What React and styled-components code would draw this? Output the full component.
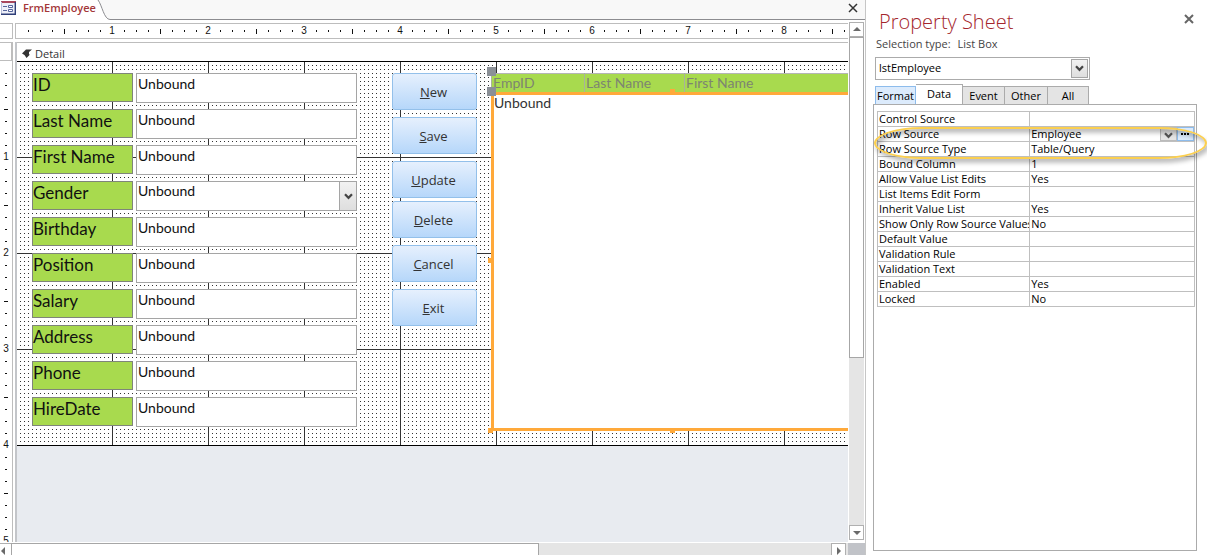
import React, { useEffect, useRef, useState } from "react";
import styled, { createGlobalStyle, css } from "styled-components";

const Global = createGlobalStyle`
  * { box-sizing: border-box; }
  html, body, #root { height: 100%; }
  body { margin: 0; background: #fff; overflow: hidden; font-family: "Open Sans", "Noto Sans", sans-serif; font-size: 11px; color: #111; font-variant-ligatures: none; }
  button, input, select { font: inherit; color: inherit; margin: 0; }
`;

const Window = styled.div`
  display: flex;
  height: 100vh;
`;

const Designer = styled.main`
  flex: 1;
  min-width: 0;
  display: flex;
  flex-direction: column;
  border-right: 1px solid #c6c6c6;
`;

/* Document tab strip */
const TabStrip = styled.div`
  display: flex;
  height: 20px;
  flex: none;
`;
const DocTab = styled.button`
  flex: none;
  display: flex;
  align-items: flex-start;
  gap: 7px;
  width: 96px;
  height: 20px;
  padding: 1px 0 0 1px;
  border: 0;
  background: #fff;
  color: #a4373a;
  font-weight: 600;
  line-height: 14px;
  white-space: nowrap;
`;
const TabEdge = styled.svg`
  flex: none;
  width: 14px;
  height: 20px;
`;
const StripRest = styled.div`
  flex: 1;
  display: flex;
  justify-content: flex-end;
  padding: 3px 7px 0 0;
  background: #f8f8f8;
  border-bottom: 1px solid #8c8c90;
`;
const CloseButton = styled.button`
  display: flex;
  align-items: center;
  justify-content: center;
  width: 10px;
  height: 10px;
  padding: 0;
  border: 0;
  background: none;
`;

/* Rulers */
const Workspace = styled.div`
  flex: 1;
  min-height: 0;
  display: flex;
  padding-top: 2px;
`;
const DesignArea = styled.div`
  flex: 1;
  min-width: 0;
  display: flex;
  flex-direction: column;
  padding-top: 1px;
`;
const RulerRow = styled.div`
  display: flex;
  gap: 2px;
  height: 16px;
  margin-bottom: 3px;
  flex: none;
`;
const RulerCorner = styled.div`
  width: 13px;
  border: 1px solid #bdbdbd;
  border-left: 0;
`;
const RulerTop = styled.div`
  flex: 1;
  min-width: 0;
  display: flex;
  overflow: hidden;
  border: 1px solid #bdbdbd;
  border-right: 0;
  padding-left: 6px;
`;
const RulerBody = styled.div`
  flex: 1;
  min-height: 0;
  display: flex;
`;
const RulerSide = styled.div`
  flex: none;
  width: 13px;
  display: flex;
  flex-direction: column;
  overflow: hidden;
  border: 1px solid #bdbdbd;
  border-width: 1px 1px 0 0;
`;
const SectionSelector = styled.div`
  flex: none;
  height: 18px;
  margin-bottom: 6px;
  border: 1px solid #bdbdbd;
  border-width: 0 1px 1px 0;
`;
const Marks = styled.div`
  flex: 1;
  min-width: 0;
  min-height: 0;
  display: flex;
  flex-direction: ${(p) => (p.$vertical ? "column" : "row")};
  overflow: hidden;
`;
const RulerCell = styled.span`
  flex: none;
  width: 12px;
  height: ${(p) => (p.$vertical ? "12px" : "14px")};
  display: flex;
  align-items: center;
  justify-content: center;
  font: 10px/12px "Liberation Sans", sans-serif;
  color: #111;
`;
const Tick = styled.i`
  background: #111;
  width: ${(p) => (p.$vertical ? (p.$long ? 4 : 2) : 1)}px;
  height: ${(p) => (p.$vertical ? 1 : p.$long ? 5 : 2)}px;
`;

/* Design surface */
const Surface = styled.div`
  flex: 1;
  min-width: 0;
  display: flex;
  flex-direction: column;
  margin-left: 2px;
  border-left: 2px solid #c3c5c9;
  background: #e8ebf0;
`;
const SectionBar = styled.div`
  flex: none;
  display: flex;
  align-items: center;
  gap: 3px;
  height: 20px;
  padding: 2px 0 0 5px;
  background: #fff;
  border-top: 1px solid #bdbdbd;
  border-bottom: 1px solid #000;
  color: #333;
`;
const Grid = styled.form`
  flex: none;
  display: flex;
  align-items: flex-start;
  overflow: hidden;
  padding: 11px 0 14px 15px;
  border-bottom: 1px solid #000;
  background:
    linear-gradient(to right, transparent 95px, #333 95px) 0 0 / 96px 96px,
    linear-gradient(to bottom, transparent 95px, #333 95px) 0 0 / 96px 96px,
    conic-gradient(from 90deg at 3px 3px, #333 25%, transparent 0) 0 0 / 4px 4px,
    #fff;
`;
const Fields = styled.div`
  flex: none;
  display: grid;
  grid-template-columns: 101px 221px;
  gap: 6px 3px;
`;
const FieldLabel = styled.label`
  height: 29px;
  background: #a8da4e;
  border: 1px solid #7f857a;
  color: #111;
  font: 17px/22px Lato, sans-serif;
  white-space: nowrap;
`;
const fieldBox = css`
  width: 100%;
  height: 30px;
  border: 1px solid #a5a5a5;
  border-radius: 0;
  background: #fff;
  color: #111;
  font: 14px/18px Lato, sans-serif;
  outline: 0;
`;
const FieldInput = styled.input`
  ${fieldBox}
  padding: 0 1px 10px;
`;
const SelectWrap = styled.div`
  display: grid;
  grid-template-columns: 1fr 18px;
`;
const FieldSelect = styled.select`
  ${fieldBox}
  padding: 0 1px 10px;
  appearance: none;
  grid-area: 1 / 1 / 2 / 3;
`;
const DropMark = styled.span`
  grid-area: 1 / 2;
  display: flex;
  align-items: center;
  justify-content: center;
  pointer-events: none;
  border: 1px solid #a5a5a5;
  background: linear-gradient(#f2f2f2, #dedede);
  color: #444;
`;
const Actions = styled.div`
  flex: none;
  display: flex;
  flex-direction: column;
  width: 85px;
  margin: 0 15px 0 35px;
  gap: 7px;
`;
const ActionGroup = styled.div`
  display: flex;
  flex-direction: column;
  gap: 7px;
  & + & { margin-top: -4px; }
`;
const ActionButton = styled.button`
  height: 37px;
  padding: 0 2px 0 0;
  border: 1px solid #93c0ea;
  border-radius: 3px;
  background: linear-gradient(#e6f0fd, #b6d7fa);
  color: #333;
  font: 13px/18px "Open Sans", sans-serif;
`;

const ListBox = styled.div`
  position: relative;
  flex: 1;
  min-width: 0;
  height: 358px;
  margin-left: -1px;
  display: flex;
  flex-direction: column;
`;
const ListHeader = styled.table`
  flex: none;
  width: 100%;
  height: 19px;
  table-layout: fixed;
  border-collapse: collapse;
  background: #a8da4e;
  border-top: 1px solid #b5b5b5;
  color: #7d8571;
  font: 14px/18px Lato, sans-serif;
`;
const HeadCell = styled.th`
  width: ${(p) => p.$width || "auto"};
  padding: 0 0 0 1px;
  border-left: 1px solid #a9b29c;
  text-align: left;
  font-weight: 400;
  white-space: nowrap;
`;
const ListBody = styled.div`
  flex: 1;
  border: 3px solid #ffa93a;
  border-right: 0;
  background: #fff;
  color: #333;
  font: 14px/16px Lato, sans-serif;
`;
const Handle = styled.i`
  position: absolute;
  width: ${(p) => p.$size}px;
  height: ${(p) => p.$size}px;
  background: ${(p) => p.$color};
  left: ${(p) => p.$x};
  top: ${(p) => p.$y};
`;

/* Scroll bars */
const VScroll = styled.div`
  flex: none;
  width: 15px;
  margin: 0 1px 2px;
  display: flex;
  flex-direction: column;
  background: #e5e5e5;
`;
const ScrollButton = styled.button`
  flex: none;
  display: flex;
  align-items: center;
  justify-content: center;
  width: 15px;
  height: 15px;
  padding: 0;
  border: 1px solid #b0b0b0;
  background: #fff;
  color: #6a6a6a;
`;
const VThumb = styled.div`
  height: 62%;
  border: 1px solid #a6a6a6;
  background: #fff;
`;
const Spacer = styled.div`
  flex: 1;
`;
const HScroll = styled.div`
  flex: none;
  display: flex;
  height: 13px;
  border-top: 1px solid #fff;
  background: #e5e5e5;
  overflow: hidden;
`;
const HThumb = styled.div`
  width: 61%;
  height: 14px;
  border: 1px solid #a6a6a6;
  background: #fff;
`;
const LeftArrow = styled(ScrollButton)`
  width: 11px;
  border-left: 0;
  border-right: 0;
  justify-content: flex-start;
`;
const ScrollCorner = styled.div`
  flex: none;
  width: 17px;
  margin-left: 2px;
  background: #c1c3c8;
`;

/* Property sheet */
const Sheet = styled.aside`
  flex: none;
  width: 341px;
  display: flex;
  flex-direction: column;
  padding: 8px 10px 4px 7px;
`;
const SheetHead = styled.header`
  display: flex;
  justify-content: space-between;
  padding: 0 3px 0 6px;
`;
const SheetTitle = styled.h1`
  margin: 0;
  color: #a4262c;
  font: 300 20px/28px "Open Sans", sans-serif;
`;
const SheetClose = styled(CloseButton)`
  margin-top: 6px;
`;
const Selection = styled.p`
  display: flex;
  gap: 7px;
  margin: 0 0 5px 3px;
  color: #444;
  line-height: 16px;
`;
const ObjectPicker = styled.div`
  width: 215px;
  height: 23px;
  margin-left: 2px;
  padding: 1px;
  display: grid;
  grid-template-columns: 1fr 17px;
  border: 1px solid #ababab;
`;
const ObjectSelect = styled.select`
  grid-area: 1 / 1 / 2 / 3;
  appearance: none;
  border: 0;
  padding: 0 2px 3px;
  background: #fff;
  color: #000;
  outline: 0;
`;
const Tabs = styled.div`
  display: flex;
  align-items: flex-end;
  height: 20px;
  margin: 4px 0 0 2px;
`;
const Tab = styled.button`
  width: ${(p) => p.$width}px;
  height: 18px;
  padding: 0;
  border: 1px solid #ababab;
  border-width: 1px 1px 0 0;
  background: #e4e4e4;
  color: #000;
  line-height: 16px;
  ${(p) => p.$hot && css`background: #dcebfc; border-color: #8dbcec; border-left-width: 1px;`}
  ${(p) => p.$active && css`height: 21px; margin-bottom: -1px; padding-bottom: 3px; background: #fff; position: relative;`}
`;
const TabPanel = styled.div`
  position: relative;
  flex: 1;
  padding: 6px 1px 0 3px;
  border: 1px solid #ababab;
`;
const Props = styled.table`
  width: 100%;
  table-layout: fixed;
  border-collapse: collapse;
  color: #000;
`;
const cell = css`
  height: 15px;
  padding: 0 0 0 1px;
  border: 1px solid #bfbfbf;
  font-weight: 400;
  line-height: 14px;
  text-align: left;
  white-space: nowrap;
  overflow: hidden;
`;
const PropName = styled.th`
  ${cell}
  width: 48%;
`;
const PropValue = styled.td`
  ${cell}
`;
const ValueLine = styled.div`
  display: flex;
  height: 14px;
`;
const ValueText = styled.span`
  flex: 1;
`;
const CellButton = styled.button`
  display: flex;
  align-items: center;
  justify-content: center;
  width: 17px;
  padding: ${(p) => (p.$builder ? "0" : "3px 0 0")};
  border: 1px solid ${(p) => (p.$builder ? "#8dbcec" : "#bbb")};
  background: ${(p) => (p.$builder ? "#dcebfc" : "#e4e4e4")};
  color: ${(p) => (p.$builder ? "#000" : "#555")};
`;
const Highlight = styled.div`
  position: absolute;
  left: 0;
  right: -11px;
  top: 22px;
  height: 32px;
  pointer-events: none;
  border: 2px solid #fbcf4f;
  border-radius: 48px / 16px;
  box-shadow: 2px 4px 4px rgba(0, 0, 0, 0.25), inset 2px 4px 4px rgba(0, 0, 0, 0.25);
`;

const Chevron = () => (
  <svg width="9" height="7" viewBox="0 0 9 7"><path d="M1 1.2L4.5 4.8L8 1.2" fill="none" stroke="currentColor" strokeWidth="2.2" /></svg>
);
const Cross = ({ weight, color }) => (
  <svg width="10" height="10" viewBox="0 0 10 10"><path d="M1 1L9 9M9 1L1 9" stroke={color} strokeWidth={weight} /></svg>
);
const arrows = { up: "M0 5L4 1L8 5Z", down: "M0 2L4 6L8 2Z", left: "M5 0L1 4L5 8Z", right: "M2 0L6 4L2 8Z" };
const Arrow = ({ dir }) => (
  <svg width="8" height="8" viewBox="0 0 8 8"><path d={arrows[dir]} fill="currentColor" /></svg>
);
const FormArt = styled.svg`
  flex: none;
`;
const FormIcon = () => (
  <FormArt width="15" height="14" viewBox="0 0 15 14">
    <rect width="15" height="14" fill="#edeff8" />
    <rect width="15" height="2" fill="#a8465c" />
    <path d="M0.5 1V13" stroke="#b9c0dc" />
    <path d="M14.3 1V13.3H0" fill="none" stroke="#2f3f78" strokeWidth="1.4" />
    <path d="M2 5.5H6M2 9.5H6" stroke="#56659c" />
    <path d="M7.5 4.5H11.5V6.5H7.5ZM7.5 8.5H11.5V10.5H7.5Z" fill="#fff" stroke="#56659c" />
  </FormArt>
);
const DetailIcon = () => (
  <svg width="10" height="9" viewBox="0 0 10 9"><path d="M0 4.5L4 0.5H10L7 3V5.5H8L4.5 9L2.5 6Z" fill="#333" /></svg>
);

/* Eighth-of-an-inch marks, as many as the ruler has room for */
function Ruler({ vertical }) {
  const ref = useRef(null);
  const [count, setCount] = useState(0);
  useEffect(() => {
    const node = ref.current;
    const measure = () => setCount(Math.ceil((vertical ? node.clientHeight : node.clientWidth) / 12));
    measure();
    const observer = new ResizeObserver(measure);
    observer.observe(node);
    return () => observer.disconnect();
  }, [vertical]);
  return (
    <Marks ref={ref} $vertical={vertical}>
      {Array.from({ length: count }, (_, i) => i + 1).map((n) => (
        <RulerCell key={n} $vertical={vertical}>
          {n % 8 === 0 ? n / 8 : <Tick $vertical={vertical} $long={n % 4 === 0} />}
        </RulerCell>
      ))}
    </Marks>
  );
}

const fields = ["ID", "Last Name", "First Name", "Gender", "Birthday", "Position", "Salary", "Address", "Phone", "HireDate"];
const actionGroups = [["New", "Save", "Update"], ["Delete", "Cancel", "Exit"]];
const tabs = [["Format", 41], ["Data", 47], ["Event", 42], ["Other", 43], ["All", 41]];
const properties = [
  ["Control Source", ""], ["Row Source", "Employee"], ["Row Source Type", "Table/Query"], ["Bound Column", "1"],
  ["Allow Value List Edits", "Yes"], ["List Items Edit Form", ""], ["Inherit Value List", "Yes"],
  ["Show Only Row Source Values", "No"], ["Default Value", ""], ["Validation Rule", ""], ["Validation Text", ""],
  ["Enabled", "Yes"], ["Locked", "No"],
];
const orange = "#ffa93a";
const grey = "#8b9097";

function PropertySheet() {
  const [active, setActive] = useState("Data");
  return (
    <Sheet>
      <SheetHead>
        <SheetTitle>Property Sheet</SheetTitle>
        <SheetClose aria-label="Close property sheet"><Cross weight={2} color="#666" /></SheetClose>
      </SheetHead>
      <Selection><span>Selection type:</span><span>List Box</span></Selection>
      <ObjectPicker>
        <ObjectSelect aria-label="Object" defaultValue="lstEmployee"><option>lstEmployee</option></ObjectSelect>
        <DropMark><Chevron /></DropMark>
      </ObjectPicker>
      <Tabs role="tablist">
        {tabs.map(([name, width]) => (
          <Tab key={name} role="tab" aria-selected={active === name} $width={width} $active={active === name} $hot={name === "Format"} onClick={() => setActive(name)}>
            {name}
          </Tab>
        ))}
      </Tabs>
      <TabPanel>
        <Props>
          <tbody>
            {properties.map(([name, value]) => (
              <tr key={name}>
                <PropName scope="row">{name}</PropName>
                <PropValue>
                  {name === "Row Source" ? (
                    <ValueLine>
                      <ValueText>{value}</ValueText>
                      <CellButton aria-label="Choose source"><Chevron /></CellButton>
                      <CellButton $builder aria-label="Open builder">
                        <svg width="9" height="2" viewBox="0 0 9 2"><path d="M0 0H2V2H0ZM3 0H5V2H3ZM6 0H8V2H6Z" fill="currentColor" /></svg>
                      </CellButton>
                    </ValueLine>
                  ) : value}
                </PropValue>
              </tr>
            ))}
          </tbody>
        </Props>
        <Highlight />
      </TabPanel>
    </Sheet>
  );
}

export default function App() {
  return (
    <>
      <Global />
      <Window>
        <Designer>
          <TabStrip>
            <DocTab><FormIcon />FrmEmployee</DocTab>
            <TabEdge viewBox="0 0 14 20">
              <path d="M2 0C6 5 8 19.5 14 19.5V0Z" fill="#f8f8f8" />
              <path d="M2 0C6 5 8 19.5 14 19.5" fill="none" stroke="#8c8c90" />
            </TabEdge>
            <StripRest>
              <CloseButton aria-label="Close form"><Cross weight={1.5} color="#333" /></CloseButton>
            </StripRest>
          </TabStrip>
          <Workspace>
            <DesignArea>
              <RulerRow>
                <RulerCorner />
                <RulerTop><Ruler /></RulerTop>
              </RulerRow>
              <RulerBody>
                <RulerSide>
                  <SectionSelector />
                  <Ruler vertical />
                </RulerSide>
                <Surface>
                  <SectionBar><DetailIcon />Detail</SectionBar>
                  <Grid onSubmit={(e) => e.preventDefault()}>
                    <Fields>
                      {fields.map((name) => (
                        <React.Fragment key={name}>
                          <FieldLabel htmlFor={name}>{name}</FieldLabel>
                          {name === "Gender" ? (
                            <SelectWrap>
                              <FieldSelect id={name}><option>Unbound</option></FieldSelect>
                              <DropMark><Chevron /></DropMark>
                            </SelectWrap>
                          ) : (
                            <FieldInput id={name} defaultValue="Unbound" />
                          )}
                        </React.Fragment>
                      ))}
                    </Fields>
                    <Actions>
                      {actionGroups.map((group) => (
                        <ActionGroup key={group[0]}>
                          {group.map((name) => (
                            <ActionButton key={name} type="button"><u>{name[0]}</u>{name.slice(1)}</ActionButton>
                          ))}
                        </ActionGroup>
                      ))}
                    </Actions>
                    <ListBox>
                      <ListHeader>
                        <thead>
                          <tr><HeadCell $width="93px">EmpID</HeadCell><HeadCell $width="100px">Last Name</HeadCell><HeadCell>First Name</HeadCell></tr>
                        </thead>
                      </ListHeader>
                      <ListBody>Unbound</ListBody>
                      <Handle $size={9} $color={grey} $x="-4px" $y="-6px" />
                      <Handle $size={9} $color={grey} $x="-4px" $y="14px" />
                      <Handle $size={5} $color={orange} $x="-3px" $y="185px" />
                      <Handle $size={5} $color={orange} $x="-3px" $y="355px" />
                      <Handle $size={5} $color={orange} $x="50%" $y="16px" />
                      <Handle $size={5} $color={orange} $x="50%" $y="355px" />
                    </ListBox>
                  </Grid>
                </Surface>
              </RulerBody>
            </DesignArea>
            <VScroll>
              <ScrollButton aria-label="Scroll up"><Arrow dir="up" /></ScrollButton>
              <VThumb />
              <Spacer />
              <ScrollButton aria-label="Scroll down"><Arrow dir="down" /></ScrollButton>
            </VScroll>
          </Workspace>
          <HScroll>
            <LeftArrow aria-label="Scroll left"><Arrow dir="left" /></LeftArrow>
            <HThumb />
            <Spacer />
            <ScrollButton aria-label="Scroll right"><Arrow dir="right" /></ScrollButton>
            <ScrollCorner />
          </HScroll>
        </Designer>
        <PropertySheet />
      </Window>
    </>
  );
}
